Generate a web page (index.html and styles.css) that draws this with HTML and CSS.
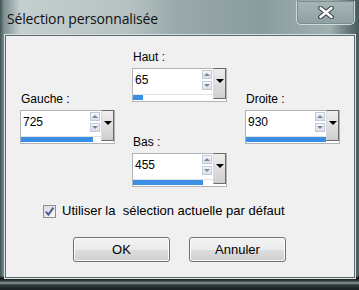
FILE: index.html
```html
<!DOCTYPE html>
<html lang="fr">
<head>
  <meta charset="UTF-8" />
  <title>Sélection personnalisée</title>
  <link rel="stylesheet" href="styles.css">
</head>
<body>
  <div class="window">
    <div class="titlebar">
      <span class="title">Sélection personnalisée</span>
      <button class="close" aria-label="Fermer">
        <svg width="16" height="13" viewBox="0 0 16 13">
          <path d="M2.5 2 L13.5 11 M13.5 2 L2.5 11" stroke="#343c3e" stroke-width="4.6" stroke-linecap="round" fill="none"/>
          <path d="M2.5 2 L13.5 11 M13.5 2 L2.5 11" stroke="#fff" stroke-width="2.6" stroke-linecap="round" fill="none"/>
        </svg>
      </button>
    </div>

    <div class="client">
      <div class="fields">
        <div class="field side">
          <div class="field-label">Gauche :</div>
          <div class="spin">
            <div class="spin-main">
              <div class="spin-row">
                <span class="value">725</span>
                <div class="arrows"><span class="arrow up"></span><span class="arrow down"></span></div>
              </div>
              <div class="bar"><div class="bar-fill" style="width: 72px"></div></div>
            </div>
            <div class="drop"></div>
          </div>
        </div>

        <div class="middle">
          <div class="field">
            <div class="field-label">Haut :</div>
            <div class="spin">
              <div class="spin-main">
                <div class="spin-row">
                  <span class="value">65</span>
                  <div class="arrows"><span class="arrow up"></span><span class="arrow down"></span></div>
                </div>
                <div class="bar"><div class="bar-fill" style="width: 10px"></div></div>
              </div>
              <div class="drop"></div>
            </div>
          </div>
          <div class="field low">
            <div class="field-label">Bas :</div>
            <div class="spin">
              <div class="spin-main">
                <div class="spin-row">
                  <span class="value">455</span>
                  <div class="arrows"><span class="arrow up"></span><span class="arrow down"></span></div>
                </div>
                <div class="bar"><div class="bar-fill" style="width: 70px"></div></div>
              </div>
              <div class="drop"></div>
            </div>
          </div>
        </div>

        <div class="field side right">
          <div class="field-label">Droite :</div>
          <div class="spin">
            <div class="spin-main">
              <div class="spin-row">
                <span class="value">930</span>
                <div class="arrows"><span class="arrow up"></span><span class="arrow down"></span></div>
              </div>
              <div class="bar"><div class="bar-fill" style="width: 80px"></div></div>
            </div>
            <div class="drop"></div>
          </div>
        </div>
      </div>

      <label class="check">
        <span class="box">
          <svg width="11" height="11" viewBox="0 0 11 11">
            <path d="M1.8 5.6 L4.4 8.6 L9.4 1.6" stroke="#4b5c93" stroke-width="2" fill="none"/>
          </svg>
        </span>
        <span>Utiliser la&nbsp; sélection actuelle par défaut</span>
      </label>

      <div class="buttons">
        <button class="btn">OK</button>
        <button class="btn">Annuler</button>
      </div>
    </div>
  </div>
</body>
</html>
```

FILE: styles.css
```css
:root {
  --client-bg: #f0f0f0;
  --blue: #3a8ee6;
  --ui-font: 'Liberation Sans', Arial, sans-serif;
}

body {
  margin: 0;
  background: #1c2526;
}

.window {
  width: 359px;
  height: 290px;
  box-sizing: border-box;
  padding: 0 4px 12px 5px;
  display: flex;
  flex-direction: column;
  background:
    linear-gradient(180deg, transparent 0, transparent 276px, #0c1212 278px, #313d3e 281px, #8f9c9d 283px, #2c3839 285px, #1a2223 290px),
    linear-gradient(90deg, #3f5153 0, #7d8f90 4px, #c6cfcf 20px, #b5c1c1 130px, #9aaaac 175px, #8a9c9e 260px, #9fb0b1 330px, #46595b 359px);
}

.titlebar {
  height: 35px;
  display: flex;
  align-items: flex-start;
  justify-content: space-between;
}

.title {
  font-family: 'Open Sans', 'Noto Sans', sans-serif;
  font-size: 14px;
  letter-spacing: -0.15px;
  color: #111;
  margin: 9px 0 0 2px;
}

.close {
  width: 59px;
  height: 24px;
  margin-top: 1px;
  padding: 0;
  border: 1px solid #d2dada;
  border-top: none;
  border-radius: 0 0 5px 5px;
  background: linear-gradient(180deg, #a7b5b6, #8fa0a2);
  box-shadow: inset 0 0 0 1px #7d8d8f;
  display: flex;
  align-items: center;
  justify-content: center;
}

.client {
  flex: 1;
  background: var(--client-bg);
  border: 1px solid #5a6a6c;
  box-shadow: 0 0 0 1px #d9e0e0;
  font-family: var(--ui-font);
  font-size: 12px;
  color: #000;
}

.fields {
  display: flex;
  gap: 17px;
  padding: 14px 0 0 14px;
}

.field.side {
  margin-top: 42px;
}

.field.right {
  margin-left: 1px;
}

.field.low {
  margin-top: 33px;
}

.field-label {
  line-height: 14px;
  margin-bottom: 4px;
  padding-left: 1px;
}

.spin {
  width: 95px;
  height: 34px;
  box-sizing: border-box;
  display: flex;
  border: 1px solid #b1b4b6;
  background: #fff;
}

.spin-main {
  flex: 1;
  display: flex;
  flex-direction: column;
}

.spin-row {
  height: 25px;
  display: flex;
  border-bottom: 1px solid #e3e3e3;
}

.value {
  flex: 1;
  padding: 4px 0 0 2px;
  font-size: 12px;
  line-height: 14px;
}

.arrows {
  width: 10px;
  padding: 1px 1px 0 0;
  display: flex;
  flex-direction: column;
  gap: 2px;
}

.arrow {
  height: 9px;
  box-sizing: border-box;
  border: 1px solid #c3cad6;
  background: linear-gradient(180deg, #f4f6fa, #d9dfea);
  display: flex;
  align-items: center;
  justify-content: center;
}

.arrow::after {
  content: "";
  border-left: 3px solid transparent;
  border-right: 3px solid transparent;
}

.arrow.up::after {
  border-bottom: 3px solid #7886a3;
}

.arrow.down::after {
  border-top: 3px solid #7886a3;
}

.bar {
  height: 5px;
  margin-top: auto;
  margin-bottom: 1px;
}

.bar-fill {
  height: 100%;
  background: var(--blue);
}

.drop {
  width: 13px;
  margin: -1px 0 2px;
  box-sizing: border-box;
  border: 1px solid #6a6a6a;
  border-left-color: #d8d8d8;
  background: linear-gradient(180deg, #eeeeee, #cfcfcf);
  display: flex;
  justify-content: center;
  padding-top: 10px;
}

.drop::after {
  content: "";
  width: 0;
  height: 0;
  border-left: 4px solid transparent;
  border-right: 4px solid transparent;
  border-top: 4px solid #000;
}

.check {
  display: flex;
  align-items: center;
  gap: 6px;
  margin: 17px 0 0 37px;
  line-height: 14px;
  font-size: 13px;
}

.check .box {
  width: 13px;
  height: 13px;
  box-sizing: border-box;
  border: 1px solid #8e8f8f;
  background: linear-gradient(135deg, #dcdcdc, #f8f8f8);
  display: flex;
  align-items: center;
  justify-content: center;
}

.buttons {
  display: flex;
  gap: 19px;
  margin: 19px 0 0 67px;
}

.btn {
  width: 97px;
  height: 25px;
  border: 1px solid #707070;
  border-radius: 3px;
  background: linear-gradient(180deg, #f2f2f2 0, #ebebeb 50%, #dddddd 51%, #cfcfcf 100%);
  box-shadow: inset 0 0 0 1px #fcfcfc;
  font-family: var(--ui-font);
  font-size: 13px;
  color: #000;
  padding: 0;
}
```
